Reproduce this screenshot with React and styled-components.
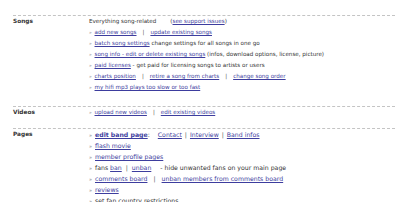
import React from 'react';
import styled, { createGlobalStyle } from 'styled-components';

const GlobalStyle = createGlobalStyle`
  body {
    margin: 0;
    background: #ffffff;
    font-family: "DejaVu Sans", Verdana, sans-serif;
    color: #333333;
  }
`;

const Page = styled.div`
  padding: 15px 5px 0 13px;
  width: 400px;
  height: 202px;
  box-sizing: border-box;
  overflow: hidden;
`;

const Section = styled.div`
  display: flex;
  border-top: 1px dashed #c4c4c4;
  padding: 0 0 ${props => props.$bottom || 12}px;
`;

const Label = styled.div`
  width: 76px;
  flex: none;
  font-weight: bold;
  font-size: 5.8px;
  line-height: 11px;
  color: #333333;
`;

const Content = styled.div`
  flex: 1;
  font-size: ${props => props.$size || 5.6}px;
  line-height: 11px;
  white-space: nowrap;
`;

const Line = styled.div`
  height: 11px;
`;

const Bullet = styled.span`
  color: #888888;
  margin-right: 1px;
  font-size: 0.8em;
`;

const Gap = styled.span`
  display: inline-block;
  width: ${props => props.$w}px;
`;

const A = styled.a`
  color: #3d3d9e;
  text-decoration: underline;
  font-weight: ${props => (props.$bold ? 'bold' : 'normal')};
  cursor: pointer;
`;

const Sep = styled.span`
  color: #555555;
  margin: 0 ${props => props.$gap || 6}px;
`;

const Item = ({ children }) => (
  <Line>
    <Bullet>»</Bullet> {children}
  </Line>
);

export default function App() {
  return (
    <>
      <GlobalStyle />
      <Page>
        <Section $bottom={13}>
          <Label>Songs</Label>
          <Content>
            <Line>
              Everything song-related<Gap $w={14} />(<A>see support issues</A>)
            </Line>
            <Item>
              <A>add new songs</A>
              <Sep>|</Sep>
              <A>update existing songs</A>
            </Item>
            <Item>
              <A>batch song settings</A> change settings for all songs in one go
            </Item>
            <Item>
              <A>song info - edit or delete existing songs</A> (infos, download options, license, picture)
            </Item>
            <Item>
              <A>paid licenses</A> - get paid for licensing songs to artists or users
            </Item>
            <Item>
              <A>charts position</A>
              <Sep>|</Sep>
              <A>retire a song from charts</A>
              <Sep>|</Sep>
              <A>change song order</A>
            </Item>
            <Item>
              <A>my hifi mp3 plays too slow or too fast</A>
            </Item>
          </Content>
        </Section>
        <Section $bottom={10}>
          <Label>Videos</Label>
          <Content>
            <Item>
              <A>upload new videos</A>
              <Sep>|</Sep>
              <A>edit existing videos</A>
            </Item>
          </Content>
        </Section>
        <Section>
          <Label>Pages</Label>
          <Content $size={6.2}>
            <Item>
              <A $bold>edit band page</A>:<Gap $w={8} />
              <A>Contact</A>
              <Sep $gap={3}>|</Sep>
              <A>Interview</A>
              <Sep $gap={3}>|</Sep>
              <A>Band infos</A>
            </Item>
            <Item>
              <A>flash movie</A>
            </Item>
            <Item>
              <A>member profile pages</A>
            </Item>
            <Item>
              fans <A>ban</A>
              <Sep $gap={4}>|</Sep>
              <A>unban</A><Gap $w={9} />- hide unwanted fans on your main page
            </Item>
            <Item>
              <A>comments board</A>
              <Sep>|</Sep>
              <A>unban members from comments board</A>
            </Item>
            <Item>
              <A>reviews</A>
            </Item>
            <Item>
              set fan country restrictions
            </Item>
          </Content>
        </Section>
      </Page>
    </>
  );
}
